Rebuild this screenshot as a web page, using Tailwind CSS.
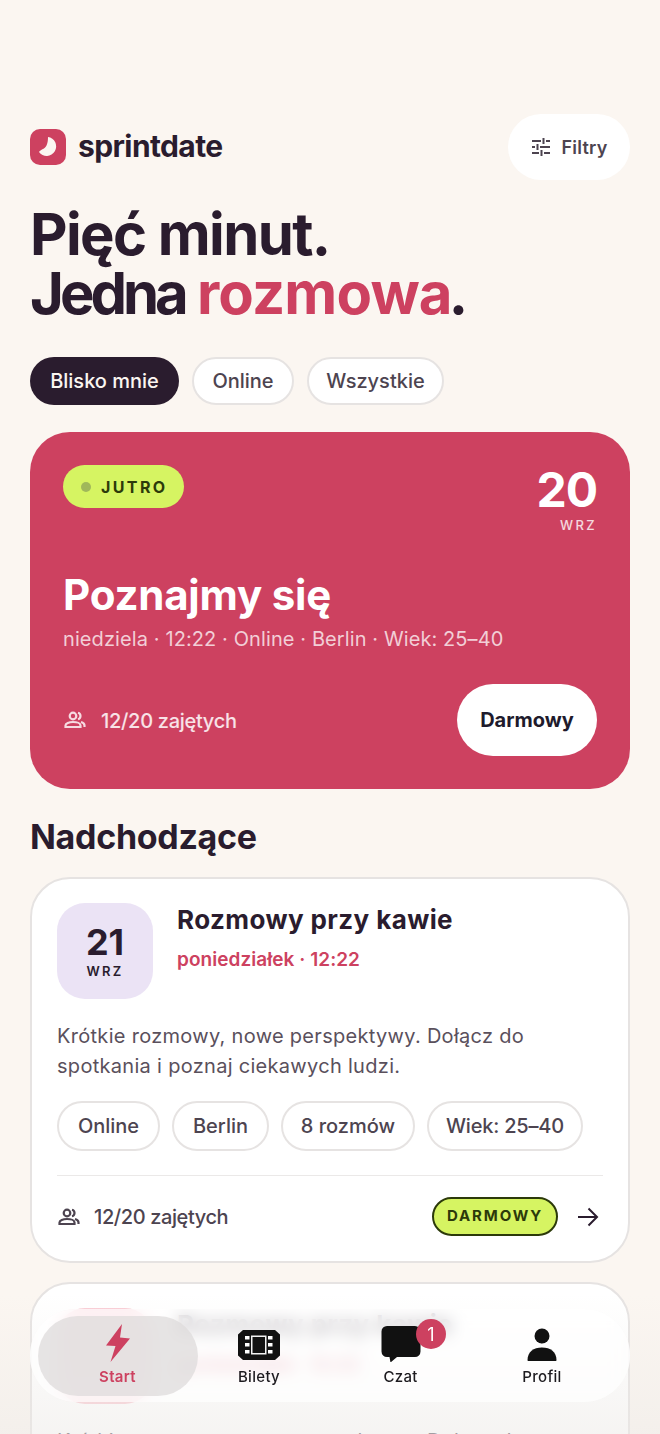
<!DOCTYPE html>
<html lang="pl"><head><meta charset="utf-8"><script src="https://cdn.jsdelivr.net/npm/@tailwindcss/browser@4"></script></head>
<body class="m-0">
<div class="relative w-[660px] h-[1434px] overflow-hidden bg-[#fbf6f1] font-['Inter','Liberation_Sans',sans-serif] text-[#2a1c2e]">
  <div class="px-[30px] pt-[114px] flex flex-col">
    <header class="flex items-center justify-between h-[66px]">
      <div class="flex items-center gap-[12px]">
        <div class="w-[36px] h-[36px] rounded-[10px] bg-[#cd4160]">
          <svg width="36" height="36" viewBox="0 0 36 36"><path d="M18 8A9.500 9.500 0 1 1 9 23C12 19 18 21 18 8Z" fill="#fbf6f1"/></svg>
        </div>
        <span class="relative top-[-1px] text-[30px] font-bold tracking-[-0.6px] leading-none">sprintdate</span>
      </div>
      <button class="h-[66px] w-[122px] rounded-full bg-white flex items-center justify-center gap-[11px] text-[#4d4450] text-[18px] font-semibold tracking-[0.2px]">
        <svg width="20" height="20" viewBox="0 0 20 20" stroke="#4d4450" stroke-width="2" fill="none"><path d="M1 4h9M15 4h4M12.500 1v6M1 10h3M9 10h10M6.500 7v6M1 16h7M13 16h6M10.500 13v6"/></svg>
        Filtry
      </button>
    </header>

    <h1 class="mt-[25px] text-[58px] leading-[59px] font-bold tracking-[-1.6px]">Pięć minut.<br><span class="tracking-[-4px]">Jedna</span> <span class="text-[#cd4160] tracking-[-0.8px]">rozmowa</span><span class="ml-[-3px]">.</span></h1>

    <div class="mt-[34px] flex gap-[13px] text-[20px] font-medium">
      <div class="h-[48px] w-[149px] rounded-full bg-[#2a1c2e] text-[#fbf6f1] flex items-center justify-center">Blisko mnie</div>
      <div class="h-[48px] w-[102px] rounded-full bg-white border-2 border-[#e6e3e2] text-[#4d4450] flex items-center justify-center">Online</div>
      <div class="h-[48px] w-[137px] rounded-full bg-white border-2 border-[#e6e3e2] text-[#4d4450] flex items-center justify-center">Wszystkie</div>
    </div>

    <section class="mt-[27px] h-[357px] rounded-[40px] bg-[#cd4160] px-[33px] pt-[33px] text-white flex flex-col">
      <div class="flex justify-between items-start">
        <div class="h-[43px] w-[121px] rounded-full bg-[#d6f462] flex items-center gap-[10px] pl-[18px]">
          <span class="w-[10px] h-[10px] rounded-full bg-[#a0b85a]"></span>
          <span class="text-[#2c3a0a] text-[16px] font-bold tracking-[2.400px]">JUTRO</span>
        </div>
        <div class="flex flex-col items-end">
          <span class="text-[48px] leading-[50px] font-bold tracking-[-1px]">20</span>
          <span class="text-[13px] leading-[16px] mt-[2px] font-medium tracking-[2.400px] text-white/80">WRZ</span>
        </div>
      </div>
      <h2 class="mt-[37px] text-[42px] leading-[50px] font-bold tracking-[-0.2px]">Poznajmy się</h2>
      <p class="mt-[5px] text-[20px] leading-[28px] text-white/75 tracking-[0.1px]">niedziela · 12:22 · Online · Berlin · Wiek: 25–40</p>
      <div class="mt-[31px] flex items-center justify-between">
        <div class="flex items-center gap-[14px] text-[20px] font-medium text-white/85 tracking-[-0.3px]">
          <svg width="24" height="24" viewBox="0 0 24 24" fill="none" stroke="#f6dbe1" stroke-width="2.200"><circle cx="10" cy="8" r="3.300"/><path d="M2.500 19v-1.500c0-2.200 3.500-3.500 7.500-3.500s7.500 1.300 7.500 3.500V19zM15 4.800a3.300 3.300 0 0 1 0 6.400M18 14c2 .6 3.500 1.800 3.500 3.500V19"/></svg>
          <span class="relative top-[1px]">12/20 zajętych</span>
        </div>
        <div class="w-[140px] h-[72px] rounded-full bg-white text-[#201a2c] text-[20px] font-bold flex items-center justify-center">Darmowy</div>
      </div>
    </section>

    <h2 class="mt-[28px] text-[34px] leading-[40px] font-bold tracking-[-0.3px]">Nadchodzące</h2>

    <article class="mt-[20px] h-[386px] rounded-[40px] bg-white border-2 border-[#e6e3e2] px-[25px] pt-[24px] flex flex-col">
      <div class="flex gap-[24px]">
        <div class="w-[96px] h-[96px] rounded-[28px] bg-[#ebe3f5] flex flex-col items-center justify-center">
          <span class="text-[36px] leading-[36px] font-bold">21</span>
          <span class="text-[13px] leading-[16px] mt-[3px] font-semibold tracking-[2.200px]">WRZ</span>
        </div>
        <div class="pt-[1px]">
          <h3 class="text-[26px] leading-[32px] font-bold tracking-[0.4px]">Rozmowy przy kawie</h3>
          <p class="mt-[10px] text-[19px] leading-[28px] font-semibold text-[#cd4160] tracking-[0.05px]">poniedziałek · 12:22</p>
        </div>
      </div>
      <p class="mt-[22px] text-[20px] leading-[30px] text-[#5a505c] tracking-[0.3px]">Krótkie rozmowy, nowe perspektywy. Dołącz do<br>spotkania i poznaj ciekawych ludzi.</p>
      <div class="mt-[20px] flex gap-[12px] text-[20px] text-[#4d4450] font-medium">
        <div class="h-[50px] w-[103px] rounded-full border-2 border-[#e6e3e2] flex items-center justify-center">Online</div>
        <div class="h-[50px] w-[97px] rounded-full border-2 border-[#e6e3e2] flex items-center justify-center">Berlin</div>
        <div class="h-[50px] w-[134px] rounded-full border-2 border-[#e6e3e2] flex items-center justify-center">8 rozmów</div>
        <div class="h-[50px] w-[156px] rounded-full border-2 border-[#e6e3e2] flex items-center justify-center tracking-[-0.2px]">Wiek: 25–40</div>
      </div>
      <div class="mt-[24px] border-t border-[#ebe9e8] pt-[21px] flex items-center justify-between">
        <div class="flex items-center gap-[13px] text-[20px] text-[#4d4450] font-medium tracking-[-0.4px]">
          <svg width="24" height="24" viewBox="0 0 24 24" fill="none" stroke="#4d4450" stroke-width="2.200"><circle cx="10" cy="8" r="3.300"/><path d="M2.500 19v-1.500c0-2.200 3.500-3.500 7.500-3.500s7.500 1.300 7.500 3.500V19zM15 4.800a3.300 3.300 0 0 1 0 6.400M18 14c2 .6 3.500 1.800 3.500 3.500V19"/></svg>
          <span>12/20 zajętych</span>
        </div>
        <div class="flex items-center gap-[19px] pr-[4px]">
          <div class="w-[126px] h-[39px] rounded-full bg-[#d6f462] border-2 border-[#2c3a0a] text-[#2c3a0a] text-[15px] font-bold tracking-[1.900px] flex items-center justify-center">DARMOWY</div>
          <svg width="22" height="22" viewBox="0 0 22 22" fill="none" stroke="#2a1c2e" stroke-width="2"><path d="M1 11h19M11.500 2.500 20 11l-8.500 8.500"/></svg>
        </div>
      </div>
    </article>

    <article class="mt-[19px] h-[386px] rounded-[40px] bg-white border-2 border-[#e6e3e2] px-[25px] pt-[24px] flex flex-col">
      <div class="flex gap-[24px]">
        <div class="w-[96px] h-[96px] rounded-[28px] bg-[#f9ccd4]"></div>
        <div class="pt-[1px]">
          <h3 class="text-[26px] leading-[32px] font-bold tracking-[0.4px]">Rozmowy przy kawie</h3>
          <p class="mt-[10px] text-[19px] leading-[28px] font-semibold text-[#cd4160] tracking-[0.05px]">poniedziałek · 12:22</p>
        </div>
      </div>
      <p class="mt-[22px] text-[20px] leading-[30px] text-[#5a505c] tracking-[0.3px]">Krótkie rozmowy, nowe perspektywy. Dołącz do</p>
    </article>
  </div>

  <div class="absolute inset-x-0 bottom-0 h-[140px] bg-gradient-to-t from-[#ece9e6]/50 to-transparent"></div>

  <nav class="absolute left-[30px] top-[1309px] w-[600px] h-[93px] rounded-[46px] bg-white/70 backdrop-blur-[8px] flex items-center text-[15px] font-medium tracking-[0.3px] text-[#1d1b1f]">
    <div class="absolute left-[8px] top-[7px] w-[160px] h-[80px] rounded-full bg-[#dedbdb]/75"></div>
    <div class="relative w-[159px] ml-[8px] flex flex-col items-center text-[#cd4160] font-semibold">
      <svg width="26" height="38" viewBox="0 0 26 38" fill="#cd4160"><path d="M17 0 1 21.500 10.500 22 5.500 38 25 14.500 15 13.500Z"/></svg>
      <span class="mt-[5px] leading-[20px]">Start</span>
    </div>
    <div class="relative w-[124px] flex flex-col items-center">
      <svg width="44" height="38" viewBox="0 -2 44 38"><path d="M6 4h32l5 4.500v21L38 34H6l-5-4.500v-21Z" fill="#111"/><g fill="#fff"><rect x="8" y="10" width="4.500" height="3.500"/><rect x="8" y="17" width="4.500" height="3.500"/><rect x="8" y="24" width="4.500" height="3.500"/><rect x="31" y="10" width="4.500" height="3.500"/><rect x="31" y="17" width="4.500" height="3.500"/><rect x="31" y="24" width="4.500" height="3.500"/><path d="M14 9.500h15.500v19H14z" fill="#fff" opacity=".95"/><path d="M15.500 11h12.500v16H15.500z" fill="#111"/></g></svg>
      <span class="mt-[5px] leading-[20px]">Bilety</span>
    </div>
    <div class="relative w-[159px] flex flex-col items-center">
      <svg width="40" height="38" viewBox="0 -1 40 38" fill="#111"><path d="M6 1h28a5.500 5.500 0 0 1 5.500 5.500v20A5.500 5.500 0 0 1 34 32H16L9.500 37.500 8.500 32H6a5.500 5.500 0 0 1-5.500-5.500v-20A5.500 5.500 0 0 1 6 1Z"/></svg>
      <span class="mt-[5px] leading-[20px]">Czat</span>
      <span class="absolute left-[95px] top-[-5px] w-[30px] h-[30px] rounded-full bg-[#cd4160] text-white text-[18px] font-normal tracking-normal flex items-center justify-center">1</span>
    </div>
    <div class="relative w-[124px] flex flex-col items-center">
      <svg width="30" height="38" viewBox="0 -2 30 38" fill="#111"><circle cx="15" cy="10" r="7.500"/><path d="M0.500 34c0-8 6-12.500 14.500-12.500S29.500 26 29.500 34c0 .6-.4 1-1 1h-27c-.6 0-1-.4-1-1Z"/></svg>
      <span class="mt-[5px] leading-[20px]">Profil</span>
    </div>
  </nav>
</div>
</body></html>
